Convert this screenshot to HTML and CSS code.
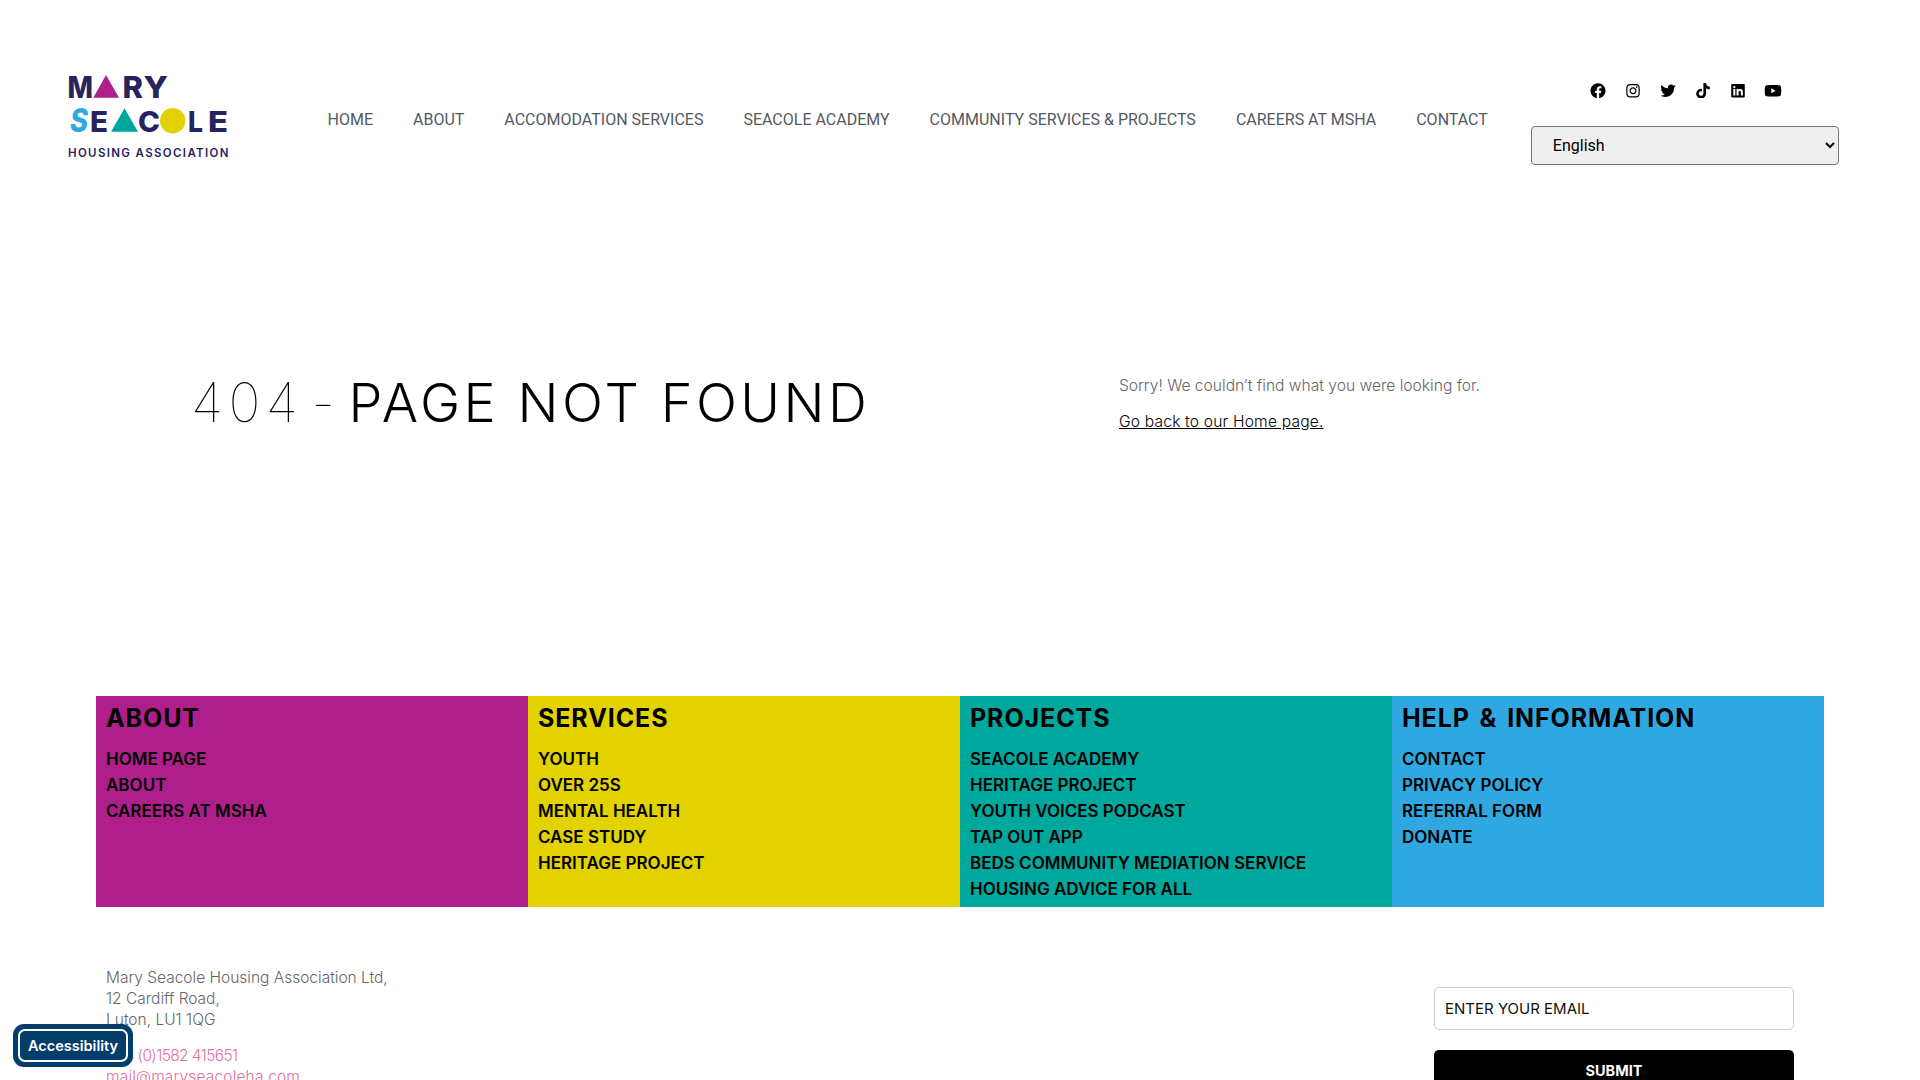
FILE: index.html
```html
<!DOCTYPE html>
<html lang="en">
<head>
<meta charset="utf-8">
<title>Page not found - Mary Seacole Housing Association</title>
<link rel="stylesheet" href="styles.css">
</head>
<body>
<header class="site-header">
  <a class="logo" href="#" aria-label="Mary Seacole Housing Association">
    <svg width="164" height="110" viewBox="0 0 164 110">
      <text class="logo-word" x="-0.5" y="33.6" textLength="25.5" lengthAdjust="spacingAndGlyphs">M</text>
      <polygon class="logo-magenta" points="38,11 51,33.7 25.3,33.7"/>
      <text class="logo-word" x="54.5" y="33.6" textLength="20.5" lengthAdjust="spacingAndGlyphs">R</text>
      <text class="logo-word" x="75.5" y="33.6" textLength="24.5" lengthAdjust="spacingAndGlyphs">Y</text>
      <text class="logo-word logo-s" x="2" y="68" textLength="18" lengthAdjust="spacingAndGlyphs">S</text>
      <text class="logo-word logo-low" x="22" y="67.7" textLength="18" lengthAdjust="spacingAndGlyphs">E</text>
      <polygon class="logo-teal" points="56.5,44.3 70,67.7 43,67.7"/>
      <text class="logo-word logo-low" x="70" y="67.7" textLength="22" lengthAdjust="spacingAndGlyphs">C</text>
      <circle class="logo-yellow" cx="104.7" cy="56.7" r="12.7"/>
      <text class="logo-word logo-low" x="120" y="67.7" textLength="15" lengthAdjust="spacingAndGlyphs">L</text>
      <text class="logo-word logo-low" x="140" y="67.7" textLength="20" lengthAdjust="spacingAndGlyphs">E</text>
      <text class="logo-sub" x="0" y="92.7" textLength="160.5" lengthAdjust="spacing">HOUSING ASSOCIATION</text>
    </svg>
  </a>
  <nav class="main-nav">
    <a href="#">HOME</a>
    <a href="#">ABOUT</a>
    <a href="#">ACCOMODATION SERVICES</a>
    <a href="#">SEACOLE ACADEMY</a>
    <a href="#">COMMUNITY SERVICES &amp; PROJECTS</a>
    <a href="#">CAREERS AT MSHA</a>
    <a href="#">CONTACT</a>
  </nav>
  <div class="header-side">
    <div class="socials">
      <a href="#" aria-label="Facebook"><svg viewBox="0 0 512 512"><path d="M504 256C504 119 393 8 256 8S8 119 8 256c0 123.78 90.69 226.38 209.25 245V327.69h-63V256h63v-54.64c0-62.15 37-96.48 93.67-96.48 27.14 0 55.52 4.84 55.52 4.84v61h-31.28c-30.8 0-40.41 19.12-40.41 38.73V256h68.78l-11 71.69h-57.78V501C413.31 482.38 504 379.78 504 256z"/></svg></a>
      <a href="#" aria-label="Instagram"><svg viewBox="0 0 448 512"><path d="M224.1 141c-63.6 0-114.9 51.3-114.9 114.9s51.3 114.9 114.9 114.9S339 319.5 339 255.9 287.7 141 224.1 141zm0 189.6c-41.1 0-74.7-33.5-74.7-74.7s33.5-74.7 74.7-74.7 74.7 33.5 74.7 74.7-33.6 74.7-74.7 74.7zm146.4-194.3c0 14.9-12 26.8-26.8 26.8-14.9 0-26.8-12-26.8-26.8s12-26.8 26.8-26.8 26.8 12 26.8 26.8zm76.1 27.2c-1.7-35.9-9.9-67.7-36.2-93.9-26.2-26.2-58-34.4-93.9-36.2-37-2.1-147.9-2.1-184.9 0-35.8 1.7-67.6 9.9-93.9 36.1s-34.4 58-36.2 93.9c-2.1 37-2.1 147.9 0 184.9 1.7 35.9 9.9 67.7 36.2 93.9s58 34.4 93.9 36.2c37 2.1 147.9 2.1 184.9 0 35.9-1.7 67.7-9.9 93.9-36.2 26.2-26.2 34.4-58 36.2-93.9 2.1-37 2.1-147.8 0-184.8zM398.8 388c-7.8 19.6-22.9 34.7-42.6 42.6-29.5 11.7-99.5 9-132.1 9s-102.7 2.6-132.1-9c-19.6-7.8-34.7-22.9-42.6-42.6-11.7-29.5-9-99.5-9-132.1s-2.6-102.7 9-132.1c7.8-19.6 22.9-34.7 42.6-42.6 29.5-11.7 99.5-9 132.1-9s102.7-2.6 132.1 9c19.6 7.8 34.7 22.9 42.6 42.6 11.7 29.5 9 99.5 9 132.1s2.7 102.7-9 132.1z"/></svg></a>
      <a href="#" aria-label="Twitter"><svg viewBox="0 0 512 512"><path d="M459.37 151.716c.325 4.548.325 9.097.325 13.645 0 138.72-105.583 298.558-298.558 298.558-59.452 0-114.68-17.219-161.137-47.106 8.447.974 16.568 1.299 25.34 1.299 49.055 0 94.213-16.568 130.274-44.832-46.132-.975-84.792-31.188-98.112-72.772 6.498.974 12.995 1.624 19.818 1.624 9.421 0 18.843-1.3 27.614-3.573-48.081-9.747-84.143-51.98-84.143-102.985v-1.299c13.969 7.797 30.214 12.67 47.431 13.319-28.264-18.843-46.781-51.005-46.781-87.391 0-19.492 5.197-37.36 14.294-52.954 51.655 63.675 129.3 105.258 216.365 109.807-1.624-7.797-2.599-15.918-2.599-24.04 0-57.828 46.782-104.934 104.934-104.934 30.213 0 57.502 12.67 76.67 33.137 23.715-4.548 46.456-13.32 66.599-25.34-7.798 24.366-24.366 44.833-46.132 57.827 21.117-2.273 41.584-8.122 60.426-16.243-14.292 20.791-32.161 39.308-52.628 54.253z"/></svg></a>
      <a href="#" aria-label="TikTok"><svg viewBox="0 0 448 512"><path d="M448,209.91a210.06,210.06,0,0,1-122.77-39.25V349.38A162.55,162.55,0,1,1,185,188.31V278.2a74.62,74.62,0,1,0,52.23,71.18V0l88,0a121.18,121.18,0,0,0,1.86,22.17h0A122.18,122.18,0,0,0,381,102.39a121.43,121.43,0,0,0,67,20.14Z"/></svg></a>
      <a href="#" aria-label="LinkedIn"><svg viewBox="0 0 448 512"><path d="M416 32H31.9C14.3 32 0 46.5 0 64.3v383.4C0 465.5 14.3 480 31.9 480H416c17.6 0 32-14.5 32-32.3V64.3c0-17.8-14.4-32.3-32-32.3zM135.4 416H69V202.2h66.5V416zm-33.2-243c-21.3 0-38.5-17.3-38.5-38.5S80.9 96 102.2 96c21.2 0 38.5 17.3 38.5 38.5 0 21.3-17.2 38.5-38.5 38.5zm282.1 243h-66.4V312c0-24.8-.5-56.7-34.5-56.7-34.6 0-39.9 27-39.9 54.9V416h-66.4V202.2h63.7v29.2h.9c8.9-16.8 30.6-34.5 62.9-34.5 67.2 0 79.7 44.3 79.7 101.9V416z"/></svg></a>
      <a href="#" aria-label="YouTube"><svg viewBox="0 0 576 512"><path d="M549.655 124.083c-6.281-23.65-24.787-42.276-48.284-48.597C458.781 64 288 64 288 64S117.22 64 74.629 75.486c-23.497 6.322-42.003 24.947-48.284 48.597-11.412 42.867-11.412 132.305-11.412 132.305s0 89.438 11.412 132.305c6.281 23.65 24.787 41.5 48.284 47.821C117.22 448 288 448 288 448s170.78 0 213.371-11.486c23.497-6.321 42.003-24.171 48.284-47.821 11.412-42.867 11.412-132.305 11.412-132.305s0-89.438-11.412-132.305zm-317.51 213.508V175.185l142.739 81.201-142.739 81.205z"/></svg></a>
    </div>
    <select class="lang-select" aria-label="Language"><option>English</option></select>
  </div>
</header>

<main class="not-found">
  <h1 class="nf-title"><span class="nf-thin">404 - </span>PAGE NOT FOUND</h1>
  <div class="nf-text">
    <p>Sorry! We couldn’t find what you were looking for.</p>
    <p class="nf-back"><a href="#">Go back to our Home page.</a></p>
  </div>
</main>

<section class="link-columns">
  <div class="link-col col-magenta">
    <h2>ABOUT</h2>
    <ul><li>HOME PAGE</li><li>ABOUT</li><li>CAREERS AT MSHA</li></ul>
  </div>
  <div class="link-col col-yellow">
    <h2>SERVICES</h2>
    <ul><li>YOUTH</li><li>OVER 25S</li><li>MENTAL HEALTH</li><li>CASE STUDY</li><li>HERITAGE PROJECT</li></ul>
  </div>
  <div class="link-col col-teal">
    <h2>PROJECTS</h2>
    <ul><li>SEACOLE ACADEMY</li><li>HERITAGE PROJECT</li><li>YOUTH VOICES PODCAST</li><li>TAP OUT APP</li><li>BEDS COMMUNITY MEDIATION SERVICE</li><li>HOUSING ADVICE FOR ALL</li></ul>
  </div>
  <div class="link-col col-blue">
    <h2>HELP &amp; INFORMATION</h2>
    <ul><li>CONTACT</li><li>PRIVACY POLICY</li><li>REFERRAL FORM</li><li>DONATE</li></ul>
  </div>
</section>

<footer class="site-footer">
  <div class="address">
    <p>Mary Seacole Housing Association Ltd,<br>12 Cardiff Road,<br>Luton, LU1 1QG</p>
    <p class="contact"><a class="phone" href="#">+44 (0)1582 415651</a><br><a class="mail" href="#">mail@maryseacoleha.com</a></p>
  </div>
  <form class="signup">
    <input class="signup-input" type="text" placeholder="ENTER YOUR EMAIL">
    <button class="signup-btn" type="button">SUBMIT</button>
  </form>
</footer>

<button class="a11y-badge" type="button"><span>Accessibility</span></button>
</body>
</html>
```
FILE: styles.css
```css
* { box-sizing: border-box; }
html, body { margin: 0; height: 1080px; overflow: hidden; background: #fff; }
body { font-family: Inter, "Noto Sans", sans-serif; color: #000; }
a { color: inherit; text-decoration: none; }

.site-header { display: flex; align-items: flex-start; height: 174px; padding: 64px 0 0 68px; }
.logo { display: block; width: 164px; height: 110px; flex: none; }
.logo svg { display: block; overflow: visible; }
.logo-word { font-family: Inter, sans-serif; font-weight: 800; font-size: 30px; fill: #27235f; }
.logo-low { font-size: 28.5px; }
.logo-s { fill: #2fa8e1; font-style: italic; font-size: 32px; }
.logo-sub { font-family: Inter, sans-serif; font-weight: 600; font-size: 11.5px; fill: #27235f; }
.logo-magenta { fill: #af1f8b; }
.logo-teal { fill: #00a79d; }
.logo-yellow { fill: #e2d300; }

.main-nav { display: flex; gap: 40px; margin-left: 95.5px; height: 110px; align-items: center; font-family: Roboto, sans-serif; font-size: 16px; color: #54595f; white-space: nowrap; }

.header-side { margin-left: 43px; width: 308px; padding-top: 16.5px; display: flex; flex-direction: column; align-items: center; }
.socials { display: flex; gap: 15px; height: 20px; margin: 0 0 25.5px 1px; }
.socials a { display: flex; width: 20px; height: 20px; align-items: center; justify-content: center; }
.socials svg { height: 15.5px; width: 20px; fill: #000; display: block; }
.lang-select { width: 308px; height: 39px; padding: 0 17px; font-family: Roboto, sans-serif; font-size: 16px; color: #000; background-color: #efefef; border: 1px solid #767676; border-radius: 4px; }

.not-found { display: grid; grid-template-columns: 928px 1fr; height: 522px; padding: 197px 0 0 191px; }
.nf-title { margin: 0; font-size: 54px; line-height: 63px; font-weight: 350; letter-spacing: 3.4px; white-space: nowrap; }
.nf-thin { font-weight: 100; letter-spacing: 5.4px; word-spacing: -12.6px; }
.nf-text { font-size: 15.6px; font-weight: 300; color: #666; line-height: 24px; padding-top: 3px; }
.nf-text p { margin: 0 0 12px; }
.nf-back { letter-spacing: .18px; }
.nf-text a { color: #000; text-decoration: underline; }

.link-columns { display: grid; grid-template-columns: repeat(4, 432px); height: 211px; margin-left: 96px; }
.link-col { padding: 6px 10px 0; }
.col-magenta { background: #af1f8b; }
.col-yellow { background: #e2d300; }
.col-teal { background: #00a79d; }
.col-blue { background: #2fa8e1; }
.link-col h2 { margin: 0 0 12px; font-size: 25px; line-height: 32px; font-weight: 700; letter-spacing: .9px; word-spacing: 3px; }
.link-col ul { margin: 0; padding: 0; list-style: none; }
.link-col li { font-size: 17px; line-height: 26px; font-weight: 560; }

.site-footer { display: flex; justify-content: space-between; padding: 60px 126px 0 106px; }
.address { font-size: 15.5px; line-height: 21px; font-weight: 300; color: #666; }
.address p { margin: 0 0 15px; }
.contact { color: #e36f9c; }
.phone { letter-spacing: -.6px; }
.mail { letter-spacing: .17px; }
.signup { width: 360px; padding-top: 20px; display: flex; flex-direction: column; gap: 20px; }
.signup-input { height: 43px; padding: 0 10px; font-family: Inter, sans-serif; font-size: 15px; font-weight: 400; border: 1px solid #ccc; border-radius: 5px; }
.signup-input::placeholder { color: #111; opacity: 1; }
.signup-btn { height: 40px; background: #000; color: #fff; font-family: Inter, sans-serif; font-size: 14.5px; font-weight: 700; border: 0; border-radius: 5px; }

.a11y-badge { position: fixed; left: 13px; top: 1024px; width: 120px; height: 43px; padding: 5px; border: 0; border-radius: 11px; background: #033e6b; }
.a11y-badge span { display: flex; align-items: center; justify-content: center; height: 100%; padding-bottom: 1px; border: 2px solid #fff; border-radius: 7px; color: #fff; font-family: Inter, sans-serif; font-size: 14.5px; font-weight: 600; }
```
